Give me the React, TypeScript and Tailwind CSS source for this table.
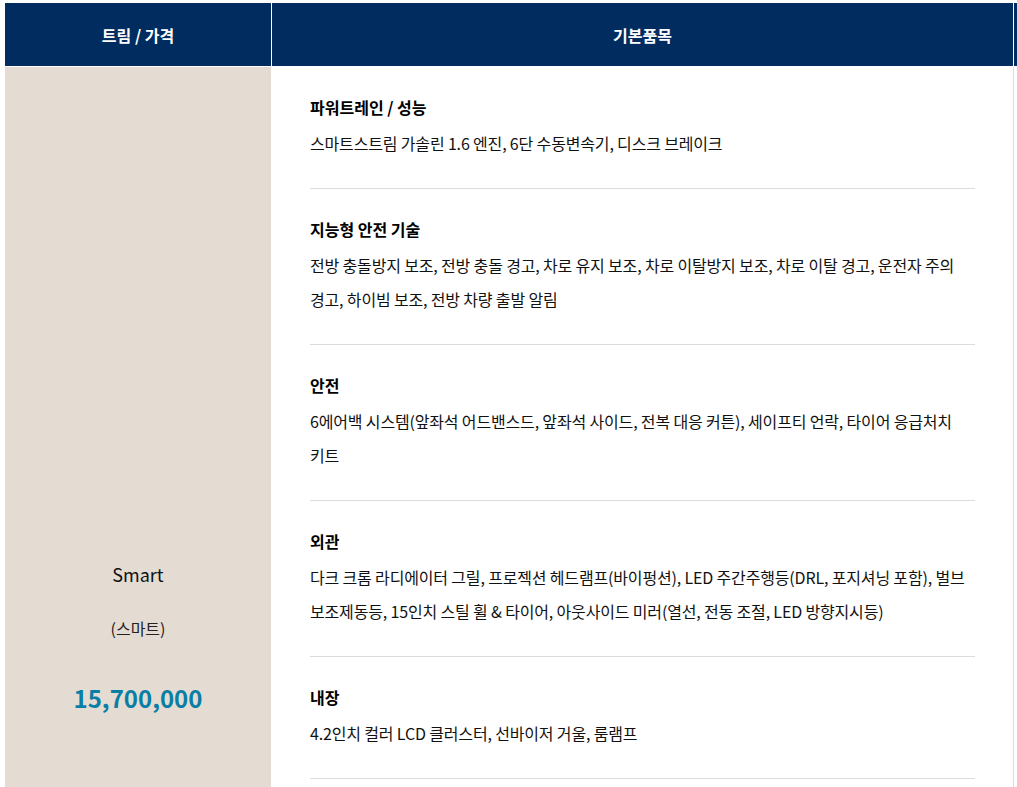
const sections = [
  {
    title: "파워트레인 / 성능",
    lines: ["스마트스트림 가솔린 1.6 엔진, 6단 수동변속기, 디스크 브레이크"],
  },
  {
    title: "지능형 안전 기술",
    lines: [
      "전방 충돌방지 보조, 전방 충돌 경고, 차로 유지 보조, 차로 이탈방지 보조, 차로 이탈 경고, 운전자 주의",
      "경고, 하이빔 보조, 전방 차량 출발 알림",
    ],
  },
  {
    title: "안전",
    lines: [
      "6에어백 시스템(앞좌석 어드밴스드, 앞좌석 사이드, 전복 대응 커튼), 세이프티 언락, 타이어 응급처치",
      "키트",
    ],
  },
  {
    title: "외관",
    lines: [
      "다크 크롬 라디에이터 그릴, 프로젝션 헤드램프(바이펑션), LED 주간주행등(DRL, 포지셔닝 포함), 벌브",
      "보조제동등, 15인치 스틸 휠 & 타이어, 아웃사이드 미러(열선, 전동 조절, LED 방향지시등)",
    ],
  },
  {
    title: "내장",
    lines: ["4.2인치 컬러 LCD 클러스터, 선바이저 거울, 룸램프"],
  },
  {
    title: "시트",
    lines: ["직물 시트, 운전석 높이 조절, 2열 6:4 분할 폴딩", "앞좌석 헤드레스트"],
  },
  {
    title: "편의",
    lines: ["매뉴얼 에어컨, 파워 윈도우, 전동 조절 아웃사이드 미러, 리모컨 키", "중앙 집중식 도어 잠금"],
  },
  {
    title: "인포테인먼트",
    lines: ["오디오, 블루투스 핸즈프리, USB 충전 단자"],
  },
];

export default function App() {
  return (
    <div
      className="h-screen w-screen overflow-hidden bg-white pl-[5px] pt-[3px] text-[#111]"
      style={{ fontFamily: '"Noto Sans CJK KR", "Noto Sans", sans-serif' }}
    >
      <div className="w-[1400px]">
        {/* Header */}
        <div className="flex h-[63px] bg-[#002c5f] text-[16px] font-bold text-white">
          <div className="flex w-[267px] items-center justify-center border-r border-white">트림 / 가격</div>
          <div className="flex w-[742px] items-center justify-center border-r border-white">기본품목</div>
          <div className="flex-1" />
        </div>

        {/* Body row */}
        <div className="flex border-t border-white">
          <div className="flex w-[267px] flex-col items-center justify-center border-r border-white bg-[#e4dcd3] pb-[6px]">
            <div className="text-[18px] leading-[24px] text-[#111]">Smart</div>
            <div className="mt-[30px] text-[16px] leading-[24px] text-[#222]">(스마트)</div>
            <div className="mt-[43px] text-[24px] font-bold leading-[30px] text-[#0a7ea4]">15,700,000</div>
          </div>

          <div className="w-[742px] border-r border-[#e4dcd3] px-[38px]">
            {sections.map((s) => (
              <div key={s.title} className="border-b border-[#dcdcdc] pb-[28px] pt-[24px]">
                <div className="mb-[2px] text-[16px] font-bold leading-[33px] text-black">{s.title}</div>
                {s.lines.map((l) => (
                  <div key={l} className="whitespace-nowrap text-[16px] leading-[34px] tracking-[-0.01em]">
                    {l}
                  </div>
                ))}
              </div>
            ))}
          </div>

          <div className="flex-1" />
        </div>
      </div>
    </div>
  );
}
